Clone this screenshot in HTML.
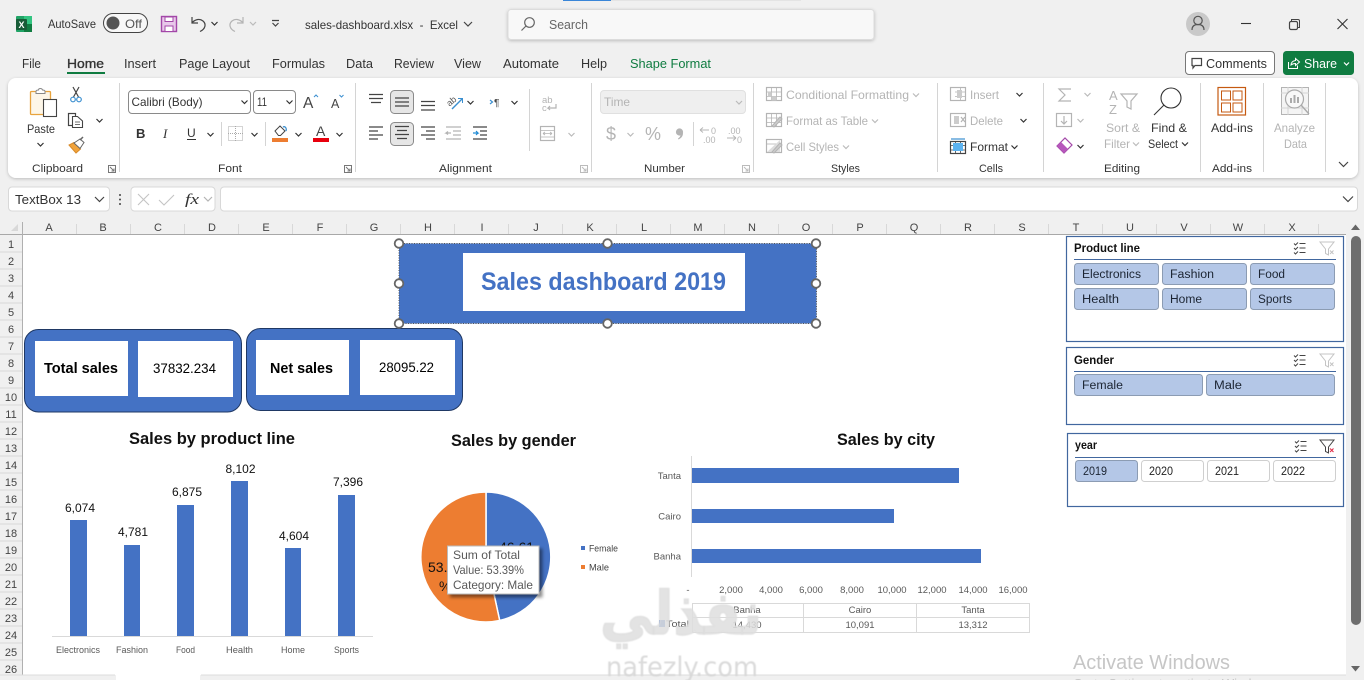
<!DOCTYPE html>
<html lang="en"><head><meta charset="utf-8"><title>sales-dashboard.xlsx - Excel</title>
<style>
html,body{margin:0;padding:0;width:1364px;height:680px;overflow:hidden;background:#f0f0f0}
svg{display:block;font-family:"Liberation Sans",sans-serif}
text{white-space:pre}
.r{font-size:12px;fill:#333}
.d{font-size:12px;fill:#b4b4b4}
.h{font-size:11px;fill:#444;text-anchor:middle}
.g{font-size:11px;fill:#333}
.tab{font-size:12.5px;fill:#333}
.cat{font-size:9.5px;fill:#595959}
.dl{font-size:12px;fill:#111;text-anchor:middle}
.sl{font-size:11.5px;fill:#1c2533}
.st{font-size:12px;font-weight:bold;fill:#111}
.ct{font-size:17px;font-weight:bold;fill:#111}
.i{fill:none;stroke:#444;stroke-width:1.2}
.il{fill:none;stroke:#b4b4b4;stroke-width:1.2}
.btn{fill:#b4c7e7;stroke:#8c9cb3;stroke-width:1}
.bw{fill:#fff;stroke:#cfcfcf;stroke-width:1}
.sb{fill:#fff;stroke:#41679f;stroke-width:1.2}
</style></head><body>
<svg width="1364" height="680" viewBox="0 0 1364 680">
<defs>
<path id="c" d="M-3-1.5 0 1.5 3-1.5" fill="none" stroke="#333" stroke-width="1.2"/>
<path id="cl" d="M-3-1.5 0 1.5 3-1.5" fill="none" stroke="#bbb" stroke-width="1.2"/>
<filter id="sh" x="-5%" y="-20%" width="110%" height="140%"><feDropShadow dx="0" dy="1" stdDeviation="1.5" flood-color="#000" flood-opacity=".22"/></filter>
<filter id="sh2" x="-10%" y="-10%" width="130%" height="130%"><feDropShadow dx="3" dy="3" stdDeviation="1.5" flood-color="#000" flood-opacity=".45"/></filter>
<filter id="blur"><feGaussianBlur stdDeviation=".5"/></filter>
</defs>
<rect width="1364" height="680" fill="#f0f0f0"/>
<rect x="563" y="0" width="48" height="1" fill="#3a86d8"/>
<rect x="611" y="0" width="190" height="1" fill="#e4e4e4"/>

<!-- title bar -->
<rect x="16" y="16" width="16" height="16" rx="1" fill="#21a366"/><rect x="24" y="24" width="8" height="8" fill="#107c41"/><rect x="24" y="16" width="8" height="8" fill="#33c481"/>
<rect x="16" y="19" width="11" height="11" rx="1" fill="#185c37"/><text x="18.5" y="28" font-size="9" font-weight="bold" fill="#fff">X</text>
<text class="r" x="48" y="28" textLength="48" lengthAdjust="spacingAndGlyphs">AutoSave</text>
<rect x="103.500" y="13.500" width="44" height="19" rx="9.500" fill="#f8f8f8" stroke="#444"/>
<circle cx="113" cy="23" r="6.500" fill="#555"/>
<text x="125" y="28" font-size="12" fill="#555" textLength="17" lengthAdjust="spacingAndGlyphs">Off</text>
<rect x="161.500" y="16.500" width="15" height="15" fill="#e8c8ea" stroke="#a347a8" stroke-width="1.400"/><rect x="165" y="17" width="8" height="4.500" fill="#fff" stroke="#a347a8"/><rect x="165" y="26" width="8" height="5.500" fill="#fff" stroke="#a347a8"/>
<path d="M192 17v6h6M192 22.500c4-3.500 8-4 11-1.500 3.500 3 2.500 8-3 10.500" class="i" stroke-width="1.300"/>
<use href="#c" x="214.500" y="23.500"/>
<path d="M243 17v6h-6M243 22.500c-4-3.500-8-4-11-1.500-3.500 3-2.500 8 3 10.500" class="il"/>
<use href="#cl" x="253" y="23.500"/>
<path d="M272 20.500h7M272.500 23l3 3 3-3" class="i"/>
<text x="305" y="29" font-size="12" fill="#333" textLength="153" lengthAdjust="spacingAndGlyphs">sales-dashboard.xlsx  -  Excel</text>
<path d="M464 22l4 4 4-4" class="i"/>
<rect x="508" y="9.500" width="366" height="30" rx="3" fill="#f8f8f8" stroke="#dcdcdc" filter="url(#sh)"/>
<circle cx="529.500" cy="22.500" r="4.800" class="i" style="stroke:#666"/><path d="M526 26l-4.500 4.500" class="i" style="stroke:#666"/>
<text x="549" y="29" font-size="12.500" fill="#666" textLength="39" lengthAdjust="spacingAndGlyphs">Search</text>
<circle cx="1198" cy="24" r="12" fill="#c9c9c9"/><circle cx="1198" cy="20.500" r="4.200" fill="none" stroke="#555" stroke-width="1.200"/><path d="M1192 30c0-4 2.500-5.500 6-5.500s6 1.500 6 5.500" fill="none" stroke="#555" stroke-width="1.200"/>
<path d="M1241 23.500h10" stroke="#333" stroke-width="1.100"/>
<rect x="1289.500" y="21.500" width="8" height="8" rx="1.500" class="i"/><path d="M1291.500 21v-1.500h6.500a1.500 1.500 0 0 1 1.500 1.500v6.500H1298" class="i" style="stroke-width:1"/>
<path d="M1337.500 19l10 10M1347.500 19l-10 10" stroke="#333" stroke-width="1.100"/>

<!-- tabs -->
<text class="tab" x="22" y="68" textLength="19" lengthAdjust="spacingAndGlyphs">File</text>
<text class="tab" x="67" y="68" textLength="37" lengthAdjust="spacingAndGlyphs" style="fill:#333;stroke:#333;stroke-width:.35">Home</text>
<rect x="67" y="72" width="38" height="2" fill="#107c41"/>
<text class="tab" x="124" y="68" textLength="32" lengthAdjust="spacingAndGlyphs">Insert</text>
<text class="tab" x="179" y="68" textLength="71" lengthAdjust="spacingAndGlyphs">Page Layout</text>
<text class="tab" x="272" y="68" textLength="53" lengthAdjust="spacingAndGlyphs">Formulas</text>
<text class="tab" x="346" y="68" textLength="27" lengthAdjust="spacingAndGlyphs">Data</text>
<text class="tab" x="394" y="68" textLength="40" lengthAdjust="spacingAndGlyphs">Review</text>
<text class="tab" x="454" y="68" textLength="27" lengthAdjust="spacingAndGlyphs">View</text>
<text class="tab" x="503" y="68" textLength="56" lengthAdjust="spacingAndGlyphs">Automate</text>
<text class="tab" x="581" y="68" textLength="26" lengthAdjust="spacingAndGlyphs">Help</text>
<text class="tab" x="630" y="68" textLength="81" lengthAdjust="spacingAndGlyphs" style="fill:#107c41">Shape Format</text>
<rect x="1185.500" y="51.500" width="89" height="23" rx="3.500" fill="#fff" stroke="#777"/>
<path d="M1192 58.500h9.500v7h-6.500l-2 2.500v-2.500h-1z" class="i"/>
<text x="1206" y="68" font-size="12.500" fill="#333" textLength="61" lengthAdjust="spacingAndGlyphs">Comments</text>
<rect x="1283" y="51" width="71" height="24" rx="3.500" fill="#107c41"/>
<path d="M1288.500 62v6.500h9v-3M1291 65c0-2.500 1.500-4 4.500-4.500v-2l4 3.500-4 3.500v-2c-2 0-3.200 .5-4.500 1.500z" fill="none" stroke="#fff" stroke-width="1"/>
<text x="1304" y="68" font-size="12.500" fill="#fff" textLength="33" lengthAdjust="spacingAndGlyphs">Share</text>
<path d="M1344 62.500l2.500 2.500 2.500-2.500" fill="none" stroke="#fff" stroke-width="1.200"/>

<!-- ribbon -->
<rect x="8" y="78" width="1350" height="100" rx="8" fill="#fff" filter="url(#sh)"/>
<g stroke="#d4d4d4" stroke-width="1">
<path d="M119.500 83v89M355.500 83v89M591.500 83v89M753.500 83v89M937.500 83v89M1043.500 83v89M1200.500 83v89M1263.500 83v89M1325.500 83v89"/>
<path d="M221.500 122v24M265.500 122v24M529.500 89v62M693.500 122v24"/>
</g>
<!-- clipboard -->
<rect x="30.500" y="91.500" width="20" height="23" rx="1" fill="#fdf6e8" stroke="#e8a33d" stroke-width="1.300"/>
<path d="M36 91.500c0-1.500 2-1.500 2.500-1.500 0-2 3.500-2 4 0 .5 0 2.500 0 2.500 1.500v2h-9z" fill="#fff" stroke="#888"/>
<rect x="43.500" y="99.500" width="13" height="17" fill="#fff" stroke="#444" stroke-width="1.100"/>
<text class="r" x="27" y="133" textLength="28" lengthAdjust="spacingAndGlyphs">Paste</text>
<use href="#c" x="40.500" y="144.500"/>
<path d="M73 87l5.500 10M79 87l-5.500 10" class="i"/><circle cx="73" cy="99.500" r="2.300" fill="none" stroke="#3b8fd0" stroke-width="1.200"/><circle cx="79" cy="99.500" r="2.300" fill="none" stroke="#3b8fd0" stroke-width="1.200"/>
<rect x="68.500" y="113.500" width="7" height="12" class="i"/><path d="M72.500 116.500h5l5 4.500v6.500h-10z" fill="#fff" stroke="#444" stroke-width="1.100"/><path d="M75 122h5M75 124.500h5" stroke="#444" stroke-width=".8"/>
<use href="#c" x="99.500" y="120.500"/>
<path d="M69 145l7 8 4.500-4-6.500-6.500z" fill="#f0a33c" stroke="#d98a28"/><path d="M74 143l6 5.500 4-6-4-3.500z" fill="#fff" stroke="#666"/><path d="M80 140l3-3" stroke="#666" stroke-width="1.500"/>
<text class="g" x="32" y="172" textLength="51" lengthAdjust="spacingAndGlyphs">Clipboard</text>
<path d="M108.500 165.500h7v7h-7zM110 167l4 4M114 168.500V171h-2.500" fill="none" stroke="#777"/>
<!-- font -->
<rect x="128.500" y="90.500" width="122" height="23" rx="3.500" fill="#fff" stroke="#8a8a8a"/>
<text class="r" x="131.500" y="106" textLength="71" lengthAdjust="spacingAndGlyphs">Calibri (Body)</text><use href="#c" x="244.500" y="102"/>
<rect x="253.500" y="90.500" width="42" height="23" rx="3.500" fill="#fff" stroke="#8a8a8a"/>
<text class="r" x="257" y="106" textLength="10" lengthAdjust="spacingAndGlyphs">11</text><use href="#c" x="289.500" y="102"/>
<text x="303" y="108" font-size="15.500" fill="#444">A</text><path d="M314 97l2-2 2 2" fill="none" stroke="#3b8fd0" stroke-width="1"/>
<text x="331" y="108" font-size="12.500" fill="#444">A</text><path d="M339.500 95l2 2 2-2" fill="none" stroke="#3b8fd0" stroke-width="1"/>
<text x="136" y="138" font-size="13" font-weight="bold" fill="#333">B</text>
<text x="163" y="138" font-size="13" font-style="italic" fill="#333" font-family="Liberation Serif">I</text>
<text x="187" y="137" font-size="12" fill="#333">U</text><path d="M187 139.500h9" stroke="#333"/>
<use href="#c" x="210.500" y="134.500"/>
<rect x="228.500" y="126.500" width="14" height="14" fill="none" stroke="#aaa" stroke-dasharray="1 1"/><path d="M228 133.500h15M235.500 126v15" stroke="#aaa" stroke-dasharray="1 1"/>
<use href="#c" x="254.500" y="134.500"/>
<path d="M275 131l5-5 5 5-4.500 4.500h-2z" fill="#fff" stroke="#444"/><path d="M283 127c2-1 4 1 3 4" fill="none" stroke="#3b8fd0" stroke-width="1.300"/><rect x="272" y="138" width="16" height="4" fill="#ed7d31"/>
<use href="#c" x="298.500" y="134.500"/>
<text x="316" y="136" font-size="14" fill="#444">A</text><rect x="313" y="138" width="16" height="4" fill="#e8000d"/>
<use href="#c" x="339.500" y="134.500"/>
<text class="g" x="218" y="172" textLength="24" lengthAdjust="spacingAndGlyphs">Font</text>
<path d="M344.500 165.500h7v7h-7zM346 167l4 4M350 168.500V171h-2.500" fill="none" stroke="#777"/>
<!-- alignment -->
<path d="M369 94.500h14M369 98.500h14M371 102.500h10" class="i"/>
<rect x="390.500" y="90.500" width="23" height="23" rx="4" fill="#e6e6e6" stroke="#8a8a8a"/>
<path d="M395 98h14M395 102h14M395 106h14" class="i"/>
<path d="M421 101.500h14M421 105.500h14M421 110h14" class="i"/>
<text x="447" y="104" font-size="9" fill="#555" transform="rotate(-40 452 102)">ab</text><path d="M452 109l10-10" stroke="#3b8fd0" stroke-width="1.400"/><path d="M458 98.500h4.500v4.500" fill="none" stroke="#3b8fd0"/>
<use href="#c" x="470.500" y="102.500"/>
<path d="M490 100l2.500 2-2.500 2" fill="none" stroke="#3b8fd0" stroke-width="1.200"/><text x="494" y="106" font-size="10" fill="#444">¶</text>
<use href="#c" x="514.500" y="102.500"/>
<text x="542" y="103" font-size="9.500" fill="#b4b4b4">ab</text><text x="542" y="111" font-size="9.500" fill="#b4b4b4">c</text><path d="M556 104v4h-8l2-2M548 108l2 2" class="il"/>
<rect x="540.500" y="126.500" width="14" height="14" class="il"/><path d="M540 130.500h15M540 137h15M543 133.500h9M543 133.500l2-1.500M543 133.500l2 1.500M552 133.500l-2-1.500M552 133.500l-2 1.500" class="il" style="stroke-width:.8"/>
<use href="#cl" x="571.500" y="134.500"/>
<path d="M369 127h14M369 131h9M369 135h14M369 139h9" class="i"/>
<rect x="390.500" y="122.500" width="23" height="23" rx="4" fill="#e6e6e6" stroke="#8a8a8a"/>
<path d="M395 126.500h14M397 130.500h10M395 134.500h14M397 138.500h10" class="i"/>
<path d="M421 127h14M426 131h9M421 135h14M426 139h9" class="i"/>
<path d="M446 127h15M453 131h8M453 135h8M446 139h15M451 133h-5l2-1.500M446 133l2 1.500" class="il"/>
<path d="M473 127h14M480 131h7M480 135h7M473 139h14" class="i"/><path d="M473 133h5l-2-2M478 133l-2 2" fill="none" stroke="#1f8ad4" stroke-width="1.200"/>
<text class="g" x="439" y="172" textLength="53" lengthAdjust="spacingAndGlyphs">Alignment</text>
<path d="M580.500 165.500h7v7h-7zM582 167l4 4M586 168.500V171h-2.500" fill="none" stroke="#bbb"/>
<!-- number -->
<rect x="600.500" y="90.500" width="145" height="23" rx="3.500" fill="#efefef" stroke="#e0e0e0"/>
<text class="d" x="604" y="106" textLength="26" lengthAdjust="spacingAndGlyphs">Time</text><use href="#cl" x="739" y="102.500"/>
<text x="606" y="140" font-size="18" fill="#b4b4b4">$</text><use href="#cl" x="630.500" y="134.500"/>
<text x="645" y="140" font-size="18" fill="#b4b4b4" textLength="16" lengthAdjust="spacingAndGlyphs">%</text>
<circle cx="679.500" cy="132" r="3.600" fill="#b4b4b4"/><path d="M683 133c0 3-1.500 5-4.500 6.500l-.5-1c1.500-1 2.500-2 2.500-4z" fill="#b4b4b4"/>
<text x="711" y="134" font-size="9" fill="#b4b4b4">0</text><text x="703" y="143" font-size="9" fill="#b4b4b4">.00</text><path d="M700 130h9M700 130l3-2.500M700 130l3 2.500" class="il" style="stroke-width:.9"/>
<text x="728" y="134" font-size="9" fill="#b4b4b4">.00</text><text x="737" y="143" font-size="9" fill="#b4b4b4">0</text><path d="M727 138h9M736 138l-3-2.500M736 138l-3 2.500" class="il" style="stroke-width:.9"/>
<text class="g" x="644" y="172" textLength="41" lengthAdjust="spacingAndGlyphs">Number</text>
<path d="M742.500 165.500h7v7h-7zM744 167l4 4M748 168.500V171h-2.500" fill="none" stroke="#bbb"/>
<!-- styles -->
<rect x="766.500" y="87.500" width="15" height="13" class="il"/><path d="M766 92h16M766 96.500h16M771.500 87v14M776.500 87v14" class="il" style="stroke-width:.8"/><rect x="768" y="92" width="3.500" height="4.500" fill="#ccc"/><rect x="771.500" y="96.500" width="5" height="4" fill="#ccc"/>
<text class="d" x="786" y="99" textLength="123" lengthAdjust="spacingAndGlyphs">Conditional Formatting</text><use href="#cl" x="916" y="95"/>
<rect x="766.500" y="113.500" width="15" height="13" class="il"/><path d="M766 118h16M766 122.500h16M771.500 113v14M776.500 113v14" class="il" style="stroke-width:.8"/><path d="M772 126l8-9 2 2-8 8z" fill="#ccc" stroke="#b4b4b4"/>
<text class="d" x="786" y="125" textLength="82" lengthAdjust="spacingAndGlyphs">Format as Table</text><use href="#cl" x="875" y="121"/>
<rect x="766.500" y="139.500" width="15" height="13" class="il"/><path d="M766 144h16" class="il" style="stroke-width:.8"/><path d="M767 152l13-12v12z" fill="#ddd"/><path d="M772 152l8-9 2 2-8 8z" fill="#ccc" stroke="#b4b4b4"/>
<text class="d" x="786" y="151" textLength="53" lengthAdjust="spacingAndGlyphs">Cell Styles</text><use href="#cl" x="846" y="147"/>
<text class="g" x="831" y="172" textLength="29" lengthAdjust="spacingAndGlyphs">Styles</text>
<!-- cells -->
<rect x="950.500" y="87.500" width="15" height="13" class="il"/><path d="M955 92h11M955 96.500h11M960.500 87v14" class="il" style="stroke-width:.8"/><rect x="957" y="90" width="5" height="8" fill="#ccc"/>
<text class="d" x="970" y="99" textLength="29" lengthAdjust="spacingAndGlyphs">Insert</text><use href="#c" x="1019.500" y="94.500"/>
<rect x="950.500" y="113.500" width="15" height="13" class="il"/><rect x="954" y="116" width="5" height="8" fill="#ccc"/><path d="M961 117l4 5M965 117l-4 5" class="il"/>
<text class="d" x="970" y="125" textLength="33" lengthAdjust="spacingAndGlyphs">Delete</text><use href="#c" x="1023.500" y="120.500"/>
<rect x="950.500" y="141.500" width="15" height="12" class="i"/><path d="M950 145.500h16M950 150h16M955.500 141v13M960.500 141v13" class="i" style="stroke-width:.8"/><rect x="953" y="143" width="10" height="8" fill="#5cb3f0"/><path d="M951 139h14" stroke="#3b8fd0" stroke-width="1.200"/>
<text class="r" x="970" y="151" textLength="38" lengthAdjust="spacingAndGlyphs">Format</text><use href="#c" x="1014.500" y="147"/>
<text class="g" x="979" y="172" textLength="24" lengthAdjust="spacingAndGlyphs">Cells</text>
<!-- editing -->
<path d="M1071 89h-12l6 6-6 6h12" class="il"/><use href="#cl" x="1087.500" y="94.500"/>
<rect x="1056.500" y="113.500" width="15" height="13" class="il"/><path d="M1064 116v8M1061 121l3 3 3-3" class="il"/>
<use href="#cl" x="1080.500" y="120.500"/>
<path d="M1057 146l8-8 7 7-8 8z" fill="#fff" stroke="#a347a8" stroke-width="1.200"/><path d="M1057 146l4-4 7 7-4 4z" fill="#b757bc"/>
<use href="#c" x="1080.500" y="146.500"/>
<text x="1109" y="100" font-size="13" fill="#b4b4b4">A</text><text x="1109" y="114" font-size="13" fill="#b4b4b4">Z</text>
<path d="M1121 94h16l-6 7v8l-4-2v-6z" class="il"/>
<text class="d" x="1106" y="132" textLength="34" lengthAdjust="spacingAndGlyphs">Sort &amp;</text>
<text class="d" x="1104" y="148" textLength="26" lengthAdjust="spacingAndGlyphs">Filter</text><use href="#cl" x="1136" y="144"/>
<circle cx="1171" cy="98" r="10" fill="none" stroke="#333" stroke-width="1.100"/><path d="M1164 105l-10 10" stroke="#333" stroke-width="1.100"/>
<text class="r" x="1151" y="132" textLength="36" lengthAdjust="spacingAndGlyphs">Find &amp;</text>
<text class="r" x="1148" y="148" textLength="30" lengthAdjust="spacingAndGlyphs">Select</text><use href="#c" x="1185" y="144"/>
<text class="g" x="1104" y="172" textLength="36" lengthAdjust="spacingAndGlyphs">Editing</text>
<!-- add-ins -->
<rect x="1218" y="87.500" width="27.500" height="27.500" fill="#fff" stroke="#c55a11" stroke-width="1.200"/>
<g fill="none" stroke="#c55a11" stroke-width="1"><rect x="1221.500" y="91" width="9" height="9"/><rect x="1233" y="91" width="9" height="9"/><rect x="1221.500" y="103" width="9" height="9"/><rect x="1233" y="103" width="9" height="9"/></g>
<text class="r" x="1211" y="132" textLength="42" lengthAdjust="spacingAndGlyphs">Add-ins</text>
<text class="g" x="1212" y="172" textLength="40" lengthAdjust="spacingAndGlyphs">Add-ins</text>
<rect x="1281.500" y="87.500" width="27" height="27" fill="#f4f4f4" stroke="#b4b4b4"/><path d="M1281 93h28M1281 108h28M1288 87v28M1302 87v28" stroke="#d4d4d4"/>
<circle cx="1294.500" cy="99" r="9" fill="#f8f8f8" stroke="#aaa" stroke-width="1.200"/><path d="M1301 105l8 9" stroke="#aaa" stroke-width="1.400"/><path d="M1291 103v-5M1294.500 103v-8M1298 103v-6" stroke="#aaa" stroke-width="2"/>
<text class="d" x="1274" y="132" textLength="41" lengthAdjust="spacingAndGlyphs">Analyze</text>
<text class="d" x="1284" y="148" textLength="23" lengthAdjust="spacingAndGlyphs">Data</text>
<path d="M1339 162l4.500 4.500 4.500-4.500" class="i"/>

<!-- formula bar -->
<rect x="8.500" y="187" width="101" height="24" rx="3.500" fill="#fff" stroke="#d8d8d8"/>
<text x="15" y="204" font-size="12.500" fill="#333" textLength="66" lengthAdjust="spacingAndGlyphs">TextBox 13</text>
<path d="M95 197l4.500 4.500 4.500-4.500" class="i"/>
<circle cx="120" cy="195" r="1" fill="#444"/><circle cx="120" cy="199.500" r="1" fill="#444"/><circle cx="120" cy="204" r="1" fill="#444"/>
<rect x="131" y="187" width="84" height="24" rx="3.500" fill="#fff" stroke="#d8d8d8"/>
<path d="M138 194l11 11M149 194l-11 11" stroke="#c4c4c4" stroke-width="1.100"/>
<path d="M159 200l5 5 10-10" fill="none" stroke="#c4c4c4" stroke-width="1.100"/>
<text x="185" y="204" font-size="15" font-style="italic" font-family="Liberation Serif" fill="#333" textLength="14" lengthAdjust="spacingAndGlyphs">fx</text>
<path d="M204 197l4 4 4-4" class="il"/>
<rect x="220.500" y="187" width="1137" height="24" rx="3.500" fill="#fff" stroke="#d8d8d8"/>
<path d="M1343 196.500l5 5 5-5" class="i"/>

<!-- sheet -->
<rect x="22" y="234" width="1324" height="441" fill="#fff"/>
<path d="M0 234.500h1346" stroke="#a8a8a8"/>
<path d="M22.500 222v453" stroke="#b0b0b0"/>
<path d="M11 231l7-7v7z" fill="#d8d8d8"/>
<g stroke="#d8d8d8"><path d="M76.500 224v10M130.500 224v10M184.500 224v10M238.500 224v10M292.500 224v10M346.500 224v10M400.500 224v10M454.500 224v10M508.500 224v10M562.500 224v10M616.500 224v10M670.500 224v10M724.500 224v10M778.500 224v10M832.500 224v10M886.500 224v10M940.500 224v10M994.500 224v10M1048.500 224v10M1102.500 224v10M1156.500 224v10M1210.500 224v10M1264.500 224v10M1318.500 224v10"/>
<path d="M0 252h22M0 269h22M0 286h22M0 303h22M0 320h22M0 337h22M0 354h22M0 371h22M0 388h22M0 405h22M0 422h22M0 439h22M0 456h22M0 473h22M0 490h22M0 507h22M0 524h22M0 541h22M0 558h22M0 575h22M0 592h22M0 609h22M0 626h22M0 643h22M0 660h22"/></g>
<g><text class="h" x="49" y="231">A</text><text class="h" x="103" y="231">B</text><text class="h" x="158" y="231">C</text><text class="h" x="212" y="231">D</text><text class="h" x="266" y="231">E</text><text class="h" x="320" y="231">F</text><text class="h" x="374" y="231">G</text><text class="h" x="428" y="231">H</text><text class="h" x="482" y="231">I</text><text class="h" x="536" y="231">J</text><text class="h" x="590" y="231">K</text><text class="h" x="644" y="231">L</text><text class="h" x="698" y="231">M</text><text class="h" x="752" y="231">N</text><text class="h" x="806" y="231">O</text><text class="h" x="860" y="231">P</text><text class="h" x="914" y="231">Q</text><text class="h" x="968" y="231">R</text><text class="h" x="1022" y="231">S</text><text class="h" x="1076" y="231">T</text><text class="h" x="1130" y="231">U</text><text class="h" x="1184" y="231">V</text><text class="h" x="1238" y="231">W</text><text class="h" x="1292" y="231">X</text></g>
<g><text class="h" x="11" y="248">1</text><text class="h" x="11" y="265">2</text><text class="h" x="11" y="282">3</text><text class="h" x="11" y="299">4</text><text class="h" x="11" y="316">5</text><text class="h" x="11" y="333">6</text><text class="h" x="11" y="350">7</text><text class="h" x="11" y="367">8</text><text class="h" x="11" y="384">9</text><text class="h" x="11" y="401">10</text><text class="h" x="11" y="418">11</text><text class="h" x="11" y="435">12</text><text class="h" x="11" y="452">13</text><text class="h" x="11" y="469">14</text><text class="h" x="11" y="486">15</text><text class="h" x="11" y="503">16</text><text class="h" x="11" y="520">17</text><text class="h" x="11" y="537">18</text><text class="h" x="11" y="554">19</text><text class="h" x="11" y="571">20</text><text class="h" x="11" y="588">21</text><text class="h" x="11" y="605">22</text><text class="h" x="11" y="622">23</text><text class="h" x="11" y="639">24</text><text class="h" x="11" y="656">25</text><text class="h" x="11" y="673">26</text></g>

<!-- title shape -->
<rect x="399" y="243.500" width="417.500" height="80" fill="#4472c4"/>
<rect x="399" y="243.500" width="417.500" height="80" fill="none" stroke="#555" stroke-width="1" stroke-dasharray="1 1.500"/>
<rect x="463" y="253" width="282" height="58" fill="#fff"/>
<text x="481" y="290" font-size="25" font-weight="bold" fill="#4472c4" textLength="245" lengthAdjust="spacingAndGlyphs">Sales dashboard 2019</text>
<!-- KPI -->
<rect x="24.500" y="329.500" width="217" height="82.500" rx="14" fill="#4472c4" stroke="#1f3864"/>
<rect x="35" y="341" width="93" height="55" fill="#fff"/><rect x="138" y="341" width="95" height="56" fill="#fff"/>
<text x="44" y="373" font-size="15" font-weight="bold" fill="#000" textLength="74" lengthAdjust="spacingAndGlyphs">Total sales</text>
<text x="153" y="373" font-size="14" fill="#000" textLength="63" lengthAdjust="spacingAndGlyphs">37832.234</text>
<rect x="246.500" y="328.500" width="216" height="82" rx="14" fill="#4472c4" stroke="#1f3864"/>
<rect x="256" y="340" width="93" height="55" fill="#fff"/><rect x="360" y="340" width="95" height="55" fill="#fff"/>
<text x="270" y="373" font-size="15" font-weight="bold" fill="#000" textLength="63" lengthAdjust="spacingAndGlyphs">Net sales</text>
<text x="379" y="372" font-size="14" fill="#000" textLength="55" lengthAdjust="spacingAndGlyphs">28095.22</text>
<!-- handles -->
<g fill="#fff" stroke="#666" stroke-width="1.800">
<circle cx="399" cy="243.500" r="4.300"/><circle cx="607.500" cy="243.500" r="4.300"/><circle cx="816" cy="243.500" r="4.300"/><circle cx="399" cy="283.500" r="4.300"/><circle cx="816" cy="283.500" r="4.300"/><circle cx="399" cy="323.500" r="4.300"/><circle cx="607.500" cy="323.500" r="4.300"/><circle cx="816" cy="323.500" r="4.300"/>
</g>

<!-- column chart -->
<text class="ct" x="129" y="444" textLength="166" lengthAdjust="spacingAndGlyphs">Sales by product line</text>
<g fill="#4472c4"><rect x="70" y="520" width="17" height="116"/><rect x="124" y="545" width="16" height="91"/><rect x="177" y="505" width="17" height="131"/><rect x="231" y="481" width="17" height="155"/><rect x="285" y="548" width="16" height="88"/><rect x="338" y="495" width="17" height="141"/></g>
<path d="M52 636.500h321" stroke="#d9d9d9"/>
<text class="dl" x="80" y="512">6,074</text><text class="dl" x="133" y="536">4,781</text><text class="dl" x="187" y="496">6,875</text><text class="dl" x="240.500" y="473">8,102</text><text class="dl" x="294" y="540">4,604</text><text class="dl" x="348" y="486">7,396</text>
<text class="cat" x="56" y="653" textLength="44" lengthAdjust="spacingAndGlyphs">Electronics</text><text class="cat" x="116" y="653" textLength="32" lengthAdjust="spacingAndGlyphs">Fashion</text><text class="cat" x="176" y="653" textLength="19" lengthAdjust="spacingAndGlyphs">Food</text><text class="cat" x="226" y="653" textLength="27" lengthAdjust="spacingAndGlyphs">Health</text><text class="cat" x="281" y="653" textLength="24" lengthAdjust="spacingAndGlyphs">Home</text><text class="cat" x="334" y="653" textLength="25" lengthAdjust="spacingAndGlyphs">Sports</text>

<!-- pie -->
<text class="ct" x="451" y="446" textLength="125" lengthAdjust="spacingAndGlyphs">Sales by gender</text>
<path d="M486 557V492A65 65 0 0 1 499.700 620.500Z" fill="#4472c4" stroke="#fff" stroke-width="1.500"/>
<path d="M486 557L499.700 620.500A65 65 0 1 1 486 492Z" fill="#ed7d31" stroke="#fff" stroke-width="1.500"/>
<text x="499" y="552" font-size="14" fill="#111">46.61</text>
<text x="428" y="572" font-size="14" fill="#111">53.</text>
<text x="439" y="591" font-size="14" fill="#111">%</text>
<rect x="447.500" y="546" width="91.500" height="48" fill="#fff" stroke="#bbb" filter="url(#sh2)"/>
<text x="453" y="559" font-size="12" fill="#595959" textLength="67" lengthAdjust="spacingAndGlyphs">Sum of Total</text>
<text x="453" y="574" font-size="12" fill="#595959" textLength="71" lengthAdjust="spacingAndGlyphs">Value: 53.39%</text>
<text x="453" y="589" font-size="12" fill="#595959" textLength="80" lengthAdjust="spacingAndGlyphs">Category: Male</text>
<rect x="581" y="546" width="4" height="4" fill="#4472c4"/><rect x="581" y="565" width="4" height="4" fill="#ed7d31"/>
<text x="589" y="551.500" font-size="9.500" fill="#444" textLength="29" lengthAdjust="spacingAndGlyphs">Female</text>
<text x="589" y="570.500" font-size="9.500" fill="#444" textLength="20" lengthAdjust="spacingAndGlyphs">Male</text>

<!-- bar chart -->
<text class="ct" x="837" y="445" textLength="98" lengthAdjust="spacingAndGlyphs">Sales by city</text>
<path d="M691.500 456v121" stroke="#d9d9d9"/>
<g fill="#4472c4"><rect x="692" y="468" width="267" height="15"/><rect x="692" y="509" width="202" height="14"/><rect x="692" y="549" width="289" height="14"/></g>
<text class="cat" x="681" y="479" text-anchor="end">Tanta</text><text class="cat" x="681" y="519.500" text-anchor="end">Cairo</text><text class="cat" x="681" y="559.500" text-anchor="end">Banha</text>
<g class="cat" text-anchor="middle"><text x="688" y="593">-</text><text x="731" y="593">2,000</text><text x="771" y="593">4,000</text><text x="811" y="593">6,000</text><text x="852" y="593">8,000</text><text x="892" y="593">10,000</text><text x="932" y="593">12,000</text><text x="973" y="593">14,000</text><text x="1013" y="593">16,000</text></g>
<path d="M692.500 603.500h337v29h-337zM692 617.500h338M803.500 603v29M916.500 603v29" fill="none" stroke="#d9d9d9"/>
<g class="cat" text-anchor="middle"><text x="747" y="613">Banha</text><text x="860" y="613">Cairo</text><text x="973" y="613">Tanta</text><text x="747" y="628">14,430</text><text x="860" y="628">10,091</text><text x="973" y="628">13,312</text></g>
<rect x="659" y="620" width="6" height="7" fill="#4472c4"/>
<text class="cat" x="666" y="627" textLength="23" lengthAdjust="spacingAndGlyphs">Total</text>

<!-- slicers -->
<rect class="sb" x="1066.500" y="236.500" width="277" height="105"/>
<text class="st" x="1074" y="252" textLength="66" lengthAdjust="spacingAndGlyphs">Product line</text>
<path d="M1074 259.500h262" stroke="#41679f"/>
<path d="M1294 243.500l1.500 1.500 2.500-2.500M1294 248l1.500 1.500 2.500-2.500M1294 252.500l1.500 1.500 2.500-2.500M1299.500 243.500h6M1299.500 248h6M1299.500 252.500h6" fill="none" stroke="#444" stroke-width="1"/><path d="M1320 242h14l-5.500 7v6l-3-1.500V249z" fill="none" stroke="#c4c4c4"/><path d="M1330 250.500l3.500 3.500M1333.500 250.500l-3.500 3.500" stroke="#c4c4c4"/>
<rect class="btn" x="1074.500" y="263.500" width="84" height="21" rx="3"/><rect class="btn" x="1162.500" y="263.500" width="84" height="21" rx="3"/><rect class="btn" x="1250.500" y="263.500" width="84" height="21" rx="3"/>
<rect class="btn" x="1074.500" y="288.500" width="84" height="21" rx="3"/><rect class="btn" x="1162.500" y="288.500" width="84" height="21" rx="3"/><rect class="btn" x="1250.500" y="288.500" width="84" height="21" rx="3"/>
<text class="sl" x="1082" y="278" textLength="59" lengthAdjust="spacingAndGlyphs">Electronics</text><text class="sl" x="1170" y="278" textLength="44" lengthAdjust="spacingAndGlyphs">Fashion</text><text class="sl" x="1258" y="278" textLength="27" lengthAdjust="spacingAndGlyphs">Food</text>
<text class="sl" x="1082" y="303" textLength="37" lengthAdjust="spacingAndGlyphs">Health</text><text class="sl" x="1170" y="303" textLength="32" lengthAdjust="spacingAndGlyphs">Home</text><text class="sl" x="1258" y="303" textLength="34" lengthAdjust="spacingAndGlyphs">Sports</text>

<rect class="sb" x="1066.500" y="347.500" width="277" height="77"/>
<text class="st" x="1074" y="364" textLength="40" lengthAdjust="spacingAndGlyphs">Gender</text>
<path d="M1074 371.500h262" stroke="#41679f"/>
<path d="M1294 355.500l1.500 1.500 2.500-2.500M1294 360l1.500 1.500 2.500-2.500M1294 364.500l1.500 1.500 2.500-2.500M1299.500 355.500h6M1299.500 360h6M1299.500 364.500h6" fill="none" stroke="#444" stroke-width="1"/><path d="M1320 354h14l-5.500 7v6l-3-1.500V361z" fill="none" stroke="#c4c4c4"/><path d="M1330 362.500l3.500 3.500M1333.500 362.500l-3.500 3.500" stroke="#c4c4c4"/>
<rect class="btn" x="1074.500" y="374.500" width="128" height="21" rx="3"/><rect class="btn" x="1206.500" y="374.500" width="128" height="21" rx="3"/>
<text class="sl" x="1082" y="389" textLength="41" lengthAdjust="spacingAndGlyphs">Female</text><text class="sl" x="1214" y="389" textLength="28" lengthAdjust="spacingAndGlyphs">Male</text>

<rect class="sb" x="1067.500" y="433.500" width="276" height="73"/>
<text class="st" x="1075" y="449" textLength="22" lengthAdjust="spacingAndGlyphs">year</text>
<path d="M1075 457.500h261" stroke="#41679f"/>
<path d="M1295 441.500l1.500 1.500 2.500-2.500M1295 446l1.500 1.500 2.500-2.500M1295 450.500l1.500 1.500 2.500-2.500M1300.500 441.500h6M1300.500 446h6M1300.500 450.500h6" fill="none" stroke="#444" stroke-width="1"/><path d="M1320 440h14l-5.500 7v6l-3-1.500V447z" fill="none" stroke="#444"/><path d="M1330 448.500l3.500 3.500M1333.500 448.500l-3.500 3.500" stroke="#e0304a" stroke-width="1.100"/>
<rect class="btn" x="1075.500" y="460.500" width="62" height="21" rx="3"/><rect class="bw" x="1141.500" y="460.500" width="62" height="21" rx="3"/><rect class="bw" x="1207.500" y="460.500" width="62" height="21" rx="3"/><rect class="bw" x="1273.500" y="460.500" width="62" height="21" rx="3"/>
<text class="sl" x="1083" y="475" textLength="24" lengthAdjust="spacingAndGlyphs">2019</text><text class="sl" x="1149" y="475" textLength="24" lengthAdjust="spacingAndGlyphs" style="fill:#222">2020</text><text class="sl" x="1215" y="475" textLength="24" lengthAdjust="spacingAndGlyphs" style="fill:#222">2021</text><text class="sl" x="1281" y="475" textLength="24" lengthAdjust="spacingAndGlyphs" style="fill:#222">2022</text>

<!-- scrollbar -->
<rect x="1346" y="221" width="18" height="459" fill="#f0f0f0"/>
<path d="M1351 230l4.500-5.500 4.500 5.500z" fill="#666"/><path d="M1351 666h9l-4.500 5.500z" fill="#666"/>
<rect x="1351" y="236" width="10" height="389" rx="5" fill="#6e6e6e"/>

<!-- bottom -->
<rect x="0" y="675" width="1346" height="5" fill="#f0f0f0"/>
<path d="M0 675h115M201 675h1145" stroke="#dcdcdc"/>
<rect x="116" y="675" width="84" height="5" fill="#fff"/>

<!-- watermark -->
<g filter="url(#blur)">
<text x="600" y="634" font-family="DejaVu Sans" font-weight="bold" font-size="60" fill="#dedede" fill-opacity=".85" stroke="#dedede" stroke-opacity=".85" stroke-width="1.500" textLength="162" lengthAdjust="spacingAndGlyphs">نفذلي</text>
<text x="606" y="676" font-size="27" font-family="DejaVu Sans" fill="#d6d6d6" fill-opacity=".9" textLength="152" lengthAdjust="spacingAndGlyphs">nafezly.com</text>
</g>
<text x="1073" y="669" font-size="20" fill="#c6c6c6" textLength="157" lengthAdjust="spacingAndGlyphs">Activate Windows</text>
<text x="1073" y="688" font-size="13" fill="#c6c6c6">Go to Settings to activate Windows.</text>
</svg>
</body></html>
